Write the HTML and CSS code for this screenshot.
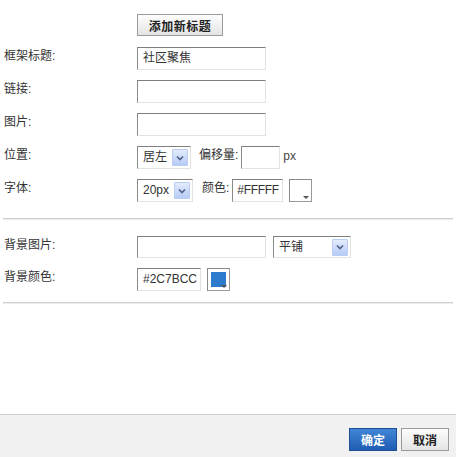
FILE: index.html
```html
<!DOCTYPE html>
<html>
<head>
<meta charset="utf-8">
<link rel="stylesheet" href="styles.css">
</head>
<body>
<div class="dialog">
  <div class="content">
    <div class="row row-top">
      <div class="label"></div>
      <button class="btn btn-gray btn-add">添加新标题</button>
    </div>
    <div class="row">
      <div class="label">框架标题:</div>
      <div class="field w-long">社区聚焦</div>
    </div>
    <div class="row">
      <div class="label">链接:</div>
      <div class="field w-long"></div>
    </div>
    <div class="row">
      <div class="label">图片:</div>
      <div class="field w-long"></div>
    </div>
    <div class="row">
      <div class="label">位置:</div>
      <div class="select w-pos"><span class="sel-text">居左</span><span class="arrow"><svg width="8" height="6" viewBox="0 0 8 6"><path d="M1 1.5 L4 4.5 L7 1.5" fill="none" stroke="#4d5f85" stroke-width="1.6"/></svg></span></div>
      <span class="inline-label gap-l">偏移量:</span>
      <div class="field w-offset"></div>
      <span class="unit">px</span>
    </div>
    <div class="row">
      <div class="label">字体:</div>
      <div class="select w-font"><span class="sel-text">20px</span><span class="arrow"><svg width="8" height="6" viewBox="0 0 8 6"><path d="M1 1.5 L4 4.5 L7 1.5" fill="none" stroke="#4d5f85" stroke-width="1.6"/></svg></span></div>
      <span class="inline-label gap-l2">颜色:</span>
      <div class="field w-color latin">#FFFFF</div>
      <div class="swatch"><span class="swatch-fill white"></span><span class="tri"></span></div>
    </div>
    <div class="sep"></div>
    <div class="row row-bg1">
      <div class="label">背景图片:</div>
      <div class="field w-long"></div>
      <div class="select w-repeat"><span class="sel-text">平铺</span><span class="arrow"><svg width="8" height="6" viewBox="0 0 8 6"><path d="M1 1.5 L4 4.5 L7 1.5" fill="none" stroke="#4d5f85" stroke-width="1.6"/></svg></span></div>
    </div>
    <div class="row row-bg2">
      <div class="label">背景颜色:</div>
      <div class="field w-bgcolor latin">#2C7BCC</div>
      <div class="swatch"><span class="swatch-fill blue"></span><span class="tri"></span></div>
    </div>
    <div class="sep sep2"></div>
  </div>
  <div class="footer">
    <button class="btn btn-blue">确定</button>
    <button class="btn btn-gray btn-cancel">取消</button>
  </div>
</div>
</body>
</html>
```

FILE: styles.css
```css
html, body {
  margin: 0;
  padding: 0;
  background: #ffffff;
}
body {
  font-family: "Liberation Sans", "Noto Sans CJK SC", sans-serif;
  font-size: 12px;
  color: #333333;
}
.dialog {
  display: flex;
  flex-direction: column;
  height: 457px;
}
.content {
  flex: 1;
  padding-top: 14px;
}
.row {
  display: flex;
  align-items: flex-start;
  height: 23px;
  margin-bottom: 10px;
}
.row-top {
  height: 22px;
  margin-bottom: 11px;
}
.label {
  width: 133px;
  padding-left: 4px;
  flex: none;
  line-height: 14px;
  padding-top: 2px;
  color: #333;
}
.field {
  box-sizing: border-box;
  height: 23px;
  border: 1px solid #e2e2e2;
  border-top-color: #7e7e7e;
  border-left-color: #8a8a8a;
  background: #fff;
  padding: 0 5px;
  line-height: 21px;
  color: #333;
  white-space: nowrap;
  overflow: hidden;
  flex: none;
}
.latin {
  font-family: "Liberation Sans", sans-serif;
  font-size: 12px;
}
.w-long { width: 129px; }
.w-offset { width: 39px; }
.w-color { width: 51px; padding: 0 3px 0 4px; letter-spacing: -0.3px; }
.w-bgcolor { width: 64px; padding: 0 5px; }
.select {
  box-sizing: border-box;
  height: 23px;
  border: 1px solid #e2e2e2;
  border-top-color: #7e7e7e;
  border-left-color: #8a8a8a;
  background: #fff;
  display: flex;
  align-items: center;
  justify-content: space-between;
  padding: 0 2px 0 5px;
  flex: none;
}
.sel-text {
  line-height: 21px;
  color: #333;
}
.w-pos { width: 54px; }
.w-font { width: 56px; }
.w-repeat { width: 78px; margin-left: 7px; }
.arrow {
  box-sizing: border-box;
  width: 16px;
  height: 17px;
  border: 1px solid #b9cdf3;
  border-radius: 1px;
  background: linear-gradient(#e3ebfd, #b6cbf6);
  display: flex;
  align-items: center;
  justify-content: center;
}
.inline-label {
  line-height: 14px;
  padding-top: 2px;
  color: #333;
  flex: none;
}
.gap-l { margin-left: 8px; margin-right: 3px; }
.gap-l2 { margin-left: 9px; margin-right: 3px; }
.unit {
  margin-left: 3px;
  line-height: 14px;
  padding-top: 3px;
  color: #444;
}
.swatch {
  position: relative;
  box-sizing: border-box;
  width: 23px;
  height: 23px;
  margin-left: 6px;
  border: 1px solid #e2e2e2;
  border-top-color: #8a8a8a;
  border-left-color: #8a8a8a;
  border-right-color: #9a9a9a;
  border-bottom-color: #9a9a9a;
  background: #fff;
  padding: 3px;
  flex: none;
}
.swatch-fill {
  display: block;
  width: 15px;
  height: 15px;
}
.swatch-fill.white { background: #fff; }
.swatch-fill.blue { background: #2c7bcc; }
.tri {
  position: absolute;
  right: 2px;
  bottom: 2px;
  width: 0;
  height: 0;
  border-left: 3px solid transparent;
  border-right: 3px solid transparent;
  border-top: 3px solid #555;
}
.sep {
  height: 0;
  border-top: 1px solid #cfcfcf;
  border-bottom: 1px solid #ececec;
  margin: 16px 3px 16px 3px;
}
.row-bg1 { height: 22px; }
.row-bg1 .field, .row-bg1 .select { height: 22px; }
.row-bg2 { margin-bottom: 10px; }
.sep2 { margin-top: 11px; }
.btn {
  box-sizing: border-box;
  height: 23px;
  padding: 0;
  font-family: "Noto Sans CJK SC", "Liberation Sans", sans-serif;
  font-size: 12px;
  font-weight: bold;
  cursor: pointer;
}
.btn-gray {
  border: 1px solid #9a9a9a;
  background: linear-gradient(#fdfdfd, #e4e4e4);
  color: #222;
}
.btn-add {
  width: 86px;
  height: 22px;
  letter-spacing: 0.5px;
}
.footer {
  height: 43px;
  box-sizing: border-box;
  border-top: 1px solid #cfcfcf;
  background: #f1f1f1;
  display: flex;
  justify-content: flex-end;
  align-items: flex-start;
  padding: 13px 7px 0 0;
  gap: 4px;
}
.btn-blue {
  width: 48px;
  border: 1px solid #1c4f95;
  background: linear-gradient(#4186d6, #1f5db3);
  color: #fff;
}
.btn-cancel {
  width: 48px;
}
```
